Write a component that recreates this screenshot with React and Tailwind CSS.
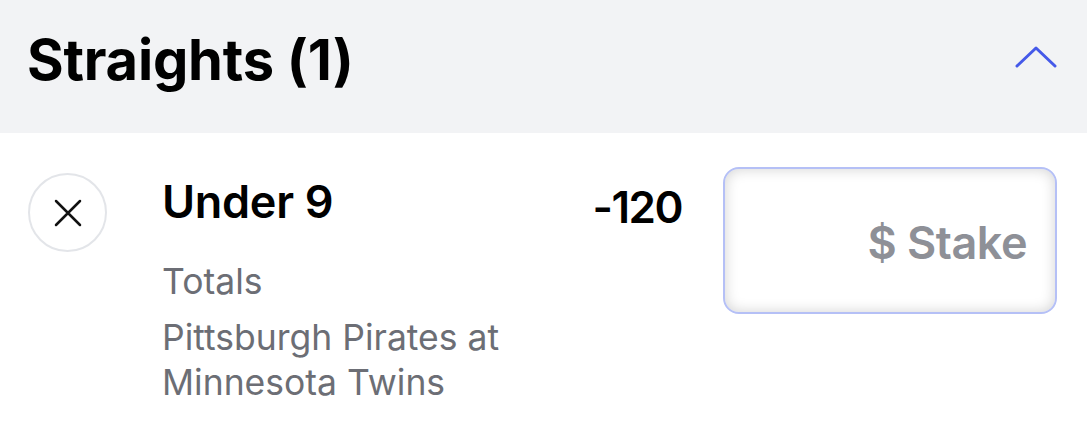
export default function App() {
  return (
    <div className="w-[1087px] h-[422px] bg-white overflow-hidden" style={{ fontFamily: 'Inter, "Liberation Sans", sans-serif' }}>
      <div className="h-[133px] bg-[#f2f3f5] flex items-center justify-between pl-[27px] pr-[30px]">
        <h1 className="text-[56px] font-bold text-black tracking-[-0.2px] leading-none pb-[14px]">Straights (1)</h1>
        <svg width="42" height="22" viewBox="0 0 42 22" fill="none" className="mb-[20px]">
          <path d="M2 20 L21 2 L40 20" stroke="#4559e9" strokeWidth="3" strokeLinecap="round" strokeLinejoin="round" />
        </svg>
      </div>
      <div className="flex pl-[28px] pr-[30px] pt-[34px]">
        <div className="w-[79px] h-[79px] rounded-full border-2 border-[#e3e5e9] flex items-center justify-center mt-[6px] shrink-0">
          <svg width="28" height="28" viewBox="0 0 28 28">
            <path d="M2 2 L26 26 M26 2 L2 26" stroke="#111" strokeWidth="2.5" strokeLinecap="round" />
          </svg>
        </div>
        <div className="ml-[55px] w-[420px] pt-[10px]">
          <div className="text-[45px] font-semibold text-black leading-[50px] tracking-[-0.3px]">Under 9</div>
          <div className="text-[35.5px] text-[#6c6e75] leading-[45px] mt-[32px]">Totals</div>
          <div className="text-[35.5px] text-[#6c6e75] leading-[45px] mt-[11px]">Pittsburgh Pirates at<br />Minnesota Twins</div>
        </div>
        <div className="flex-1 flex justify-end pr-[41px] pt-[15px]">
          <div className="text-[44px] font-semibold text-black leading-[50px] tracking-[-1.5px]">-120</div>
        </div>
        <div className="w-[334px] h-[147px] rounded-[16px] border-2 border-[#b5c0f6] shadow-[inset_0_0_14px_rgba(0,0,0,0.18)] flex items-center justify-end pr-[28px] pt-[4px] shrink-0">
          <span className="text-[45px] font-semibold text-[#8e9097] tracking-[-0.5px]">$ Stake</span>
        </div>
      </div>
    </div>
  );
}
